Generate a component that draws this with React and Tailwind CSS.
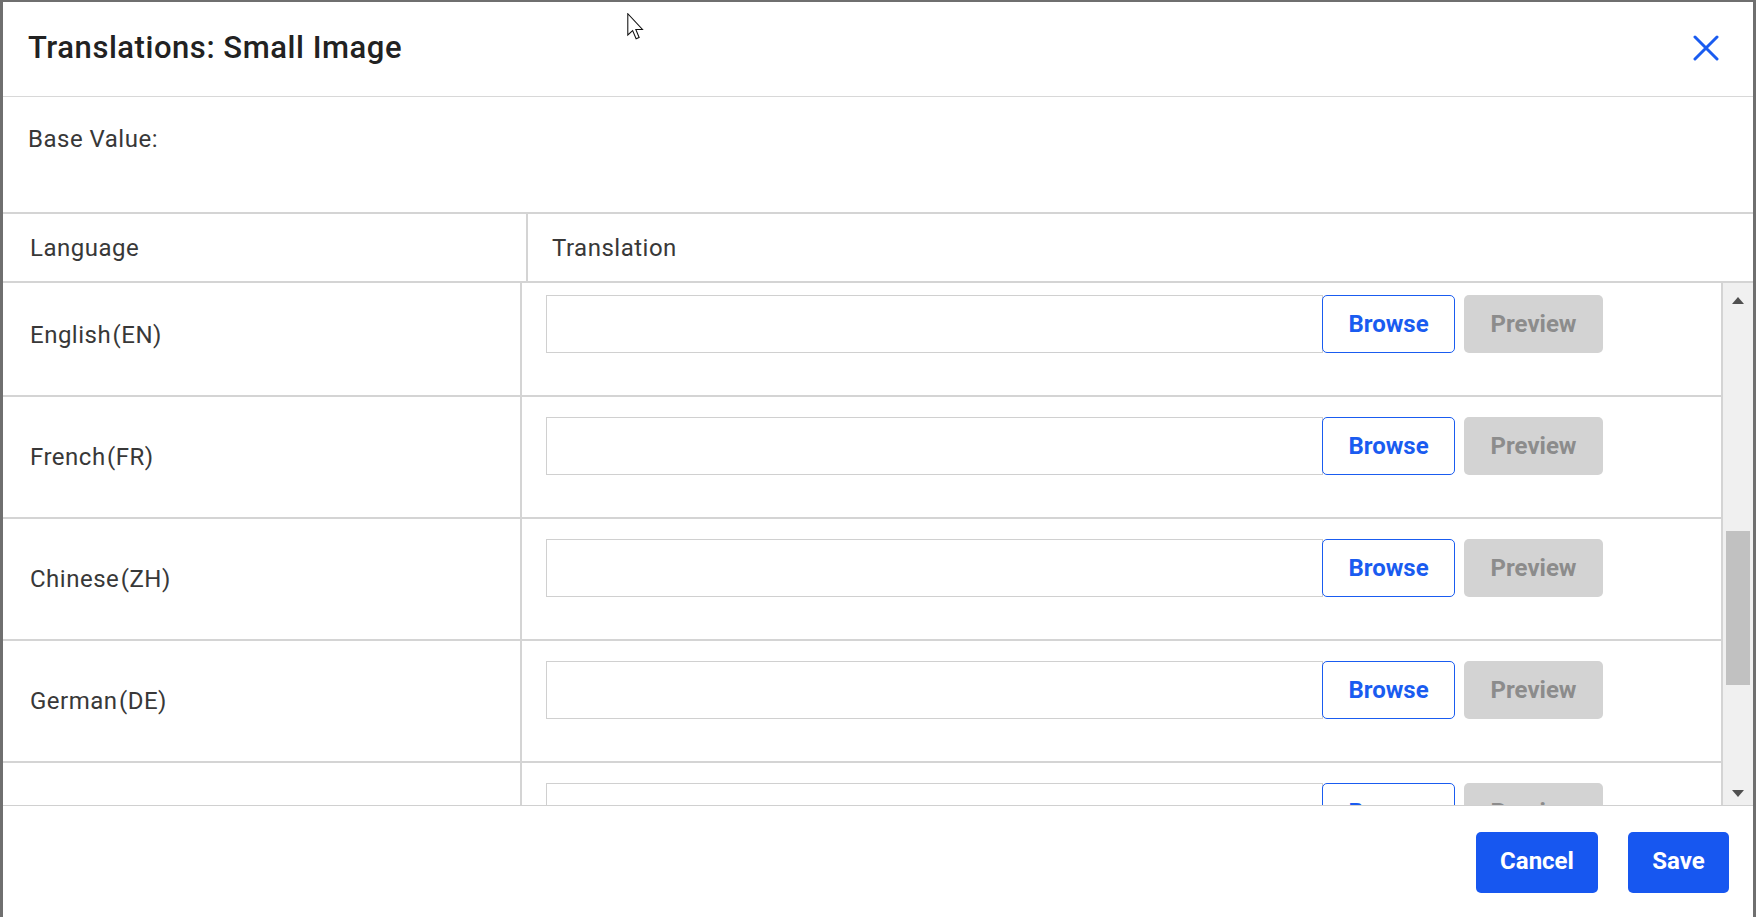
const languages = ['English (EN)', 'French (FR)', 'Chinese (ZH)', 'German (DE)', 'Japanese (JA)'];

function Row({ label }) {
  return (
    <div className="flex h-[122px] border-b-2 border-[#d4d4d4]">
      <div className="w-[519px] shrink-0 flex items-center pl-[27px] border-r-2 border-[#d4d4d4] text-[24px] text-[#383838] tracking-[0.5px] [word-spacing:-5px]">
        {label}
      </div>
      <div className="flex-1 flex items-start pt-[20px] pl-[24px]">
        <input className="w-[777px] h-[58px] border border-[#d0d0d0] outline-none" />
        <button className="-ml-px w-[133px] h-[58px] border border-[#1a5cf0] rounded-[5px] bg-white text-[#1a5cf0] text-[24px] font-bold">
          Browse
        </button>
        <button className="ml-[9px] w-[139px] h-[58px] rounded-[5px] bg-[#d3d3d3] text-[#8c8c8c] text-[24px] font-bold">
          Preview
        </button>
      </div>
    </div>
  );
}

export default function App() {
  return (
    <div className="relative w-[1756px] h-[917px] bg-[#6f6f6f] pt-[2px] pl-[3px] overflow-hidden" style={{ fontFamily: 'Roboto, "Liberation Sans", sans-serif' }}>
      <div className="w-[1750px] h-[915px] bg-white flex flex-col">
        <div className="h-[95px] shrink-0 flex items-center justify-between pl-[25px] pr-[34px] pb-[2px] border-b border-[#d8d8d8]">
          <h2 className="text-[31px] font-medium text-[#222] tracking-[0.55px]">Translations: Small Image</h2>
          <button className="text-[#1a5cf0]">
            <svg width="26" height="26" viewBox="0 0 26 26">
              <path d="M2 2 L24 24 M24 2 L2 24" stroke="#1a5cf0" strokeWidth="3" strokeLinecap="round" />
            </svg>
          </button>
        </div>

        <div className="h-[115px] shrink-0 flex items-start pl-[25px] pt-[24px] text-[24px] text-[#383838] tracking-[0.5px]">
          Base Value:
        </div>

        <div className="h-[71px] shrink-0 flex border-y-2 border-[#d4d4d4] text-[24px] text-[#383838] tracking-[0.5px]">
          <div className="w-[30%] flex items-center pl-[27px] border-r-2 border-[#d4d4d4]">Language</div>
          <div className="flex-1 flex items-center pl-[24px]">Translation</div>
        </div>

        <div className="h-[522px] shrink-0 flex">
          <div className="flex-1 overflow-hidden border-r-2 border-[#d4d4d4]">
            <div className="-mt-[8px]">
              {languages.map((l) => (
                <Row key={l} label={l} />
              ))}
            </div>
          </div>
          <div className="w-[30px] bg-[#f0f0f0] flex flex-col">
            <div className="h-[35px] flex items-center justify-center">
              <svg width="12" height="7" viewBox="0 0 12 7"><path d="M0 7 L6 0 L12 7 Z" fill="#505050" /></svg>
            </div>
            <div className="flex-1 px-[3px]">
              <div className="mt-[213px] h-[154px] bg-[#c1c1c1]" />
            </div>
            <div className="h-[24px] flex items-center justify-center">
              <svg width="12" height="7" viewBox="0 0 12 7"><path d="M0 0 L6 7 L12 0 Z" fill="#505050" /></svg>
            </div>
          </div>
        </div>

        <div className="flex-1 flex items-center justify-end gap-[30px] pr-[24px] pt-[2px] border-t border-[#d0d0d0]">
          <button className="w-[122px] h-[61px] pb-[3px] rounded-[5px] bg-[#1757f0] text-white text-[24px] font-bold">Cancel</button>
          <button className="w-[101px] h-[61px] pb-[3px] rounded-[5px] bg-[#1757f0] text-white text-[24px] font-bold">Save</button>
        </div>
      </div>

      <svg className="absolute left-[627px] top-[13px]" width="19" height="28" viewBox="0 0 12.5 18.5">
        <path d="M0.5 0.5 L0.5 14.5 L3.7 11.6 L6 17 L8 16.2 L5.8 10.9 L10.2 10.9 Z" fill="white" stroke="#111" strokeWidth="0.7" strokeLinejoin="miter" />
      </svg>
    </div>
  );
}
